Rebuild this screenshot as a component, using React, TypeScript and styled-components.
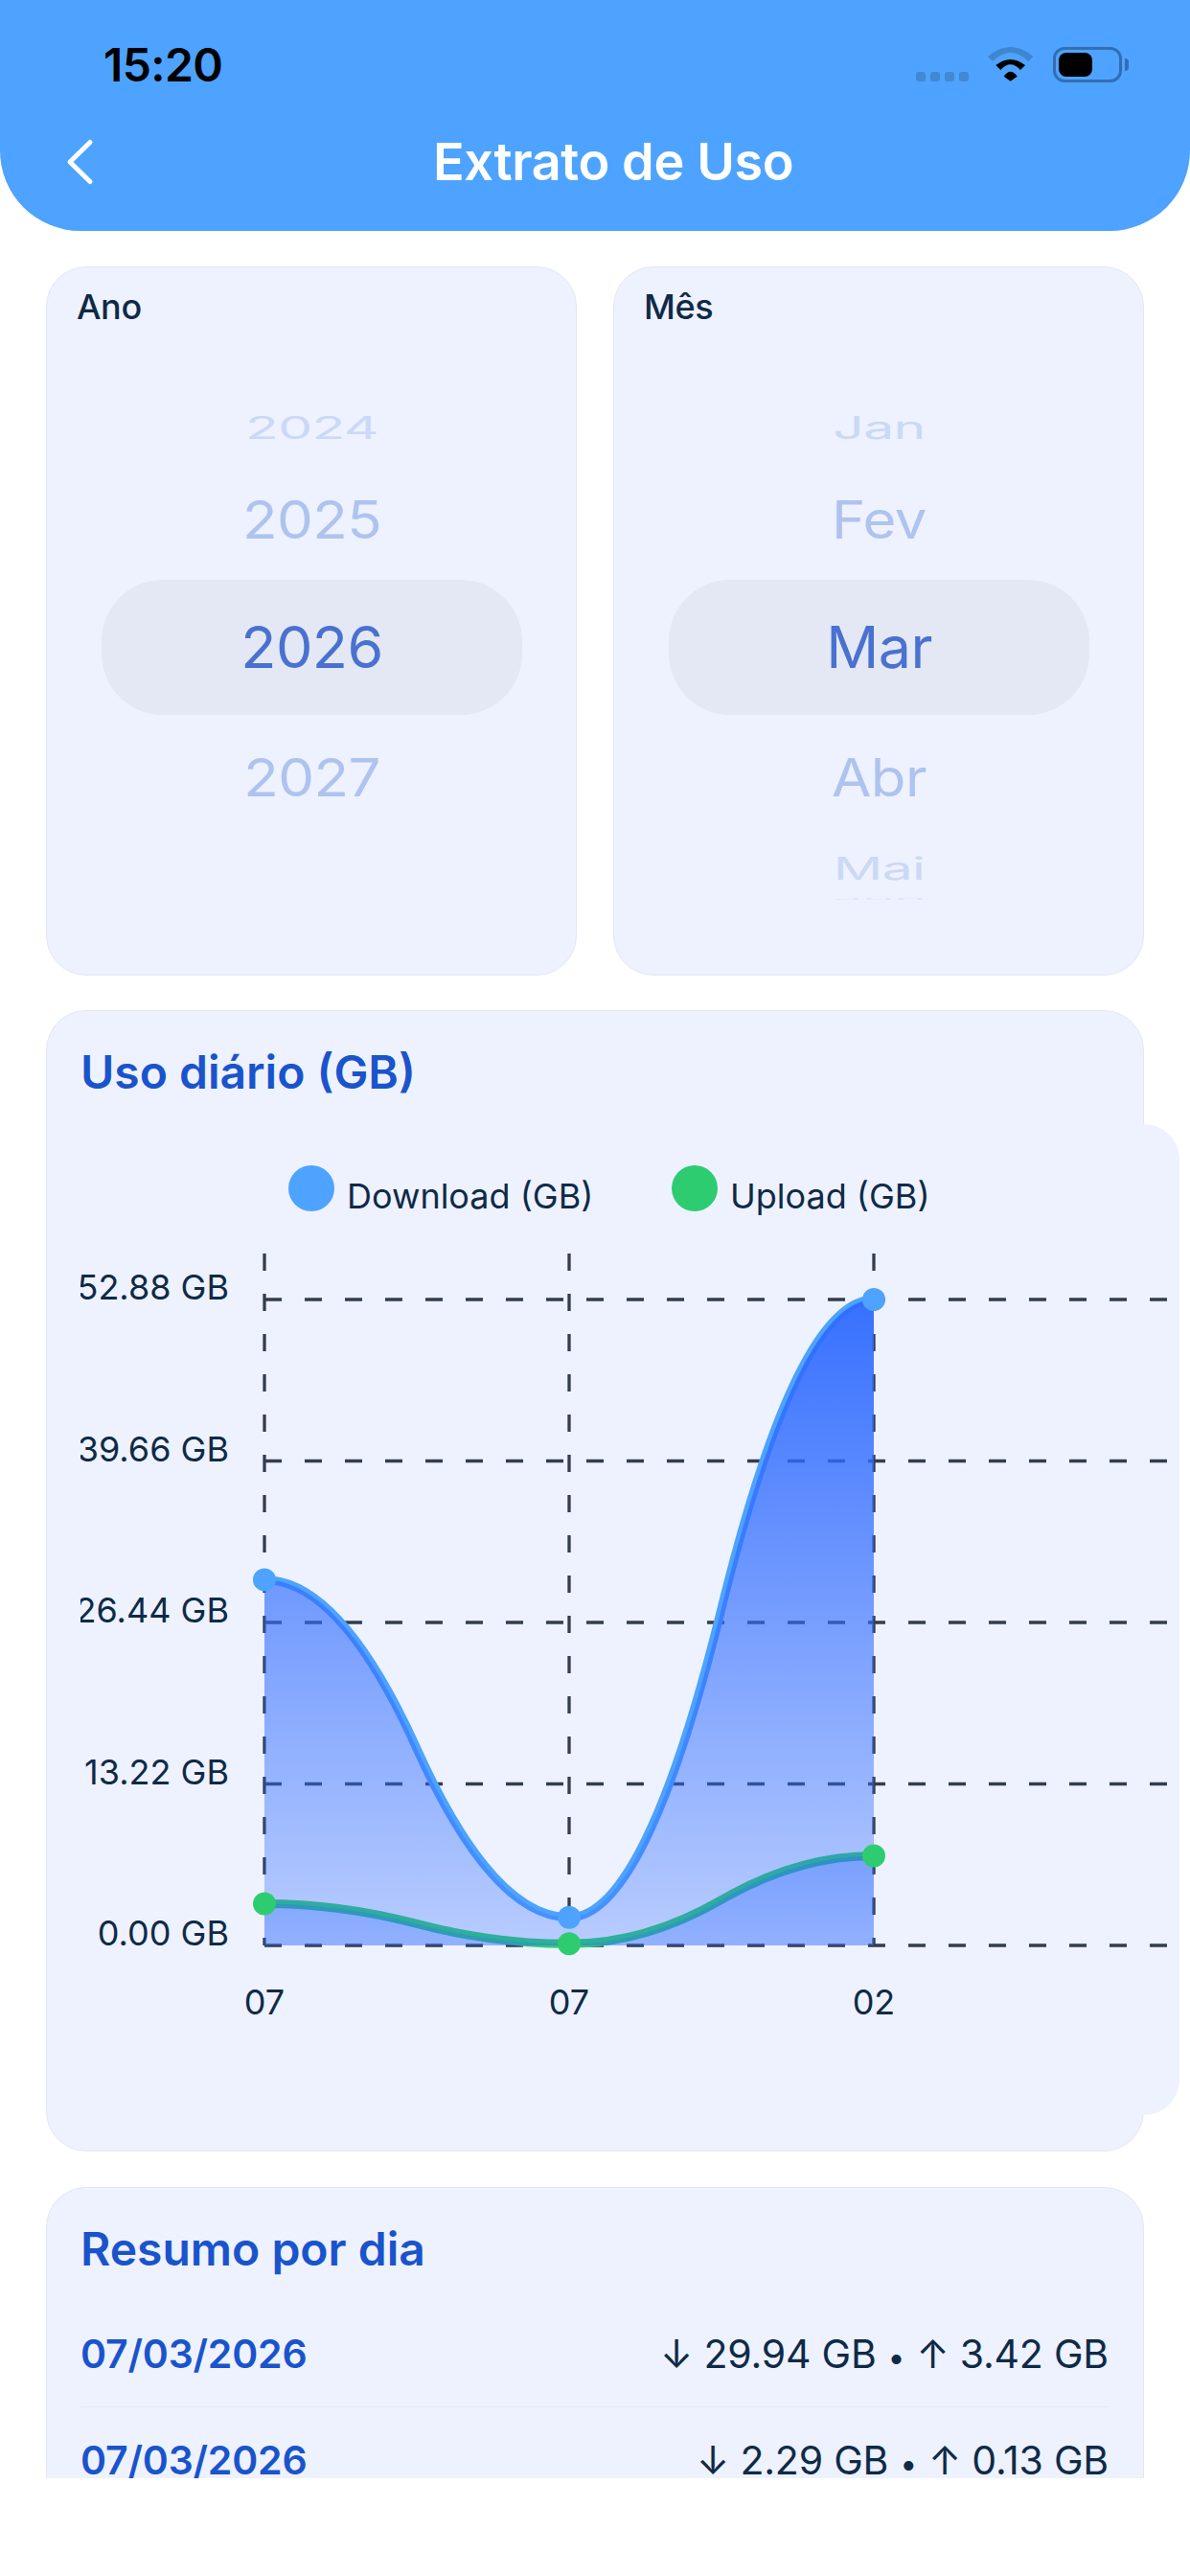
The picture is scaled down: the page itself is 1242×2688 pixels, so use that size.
import { FC } from "react";
import styled, { createGlobalStyle } from "styled-components";

const Colors = {
  header: "#4DA3FF",
  card: "#EEF2FE",
  cardBorder: "#E3E7F3",
  title: "#1A54CC",
  text: "#0F2A47",
  pill: "#E3E8F4",
  green: "#2ECC71",
  grid: "#333D4D",
};

const GlobalStyle = createGlobalStyle`
  html, body {
    margin: 0;
    padding: 0;
    background: #fff;
    font-family: Inter, "Liberation Sans", sans-serif;
  }
`;

const Page = styled.div`
  width: 1242px;
  height: 2688px;
  background: #fff;
  overflow: hidden;
`;

const Header = styled.header`
  height: 241px;
  box-sizing: border-box;
  background: ${Colors.header};
  border-radius: 0 0 84px 84px;
  display: flex;
  flex-direction: column;
`;

const StatusBar = styled.div`
  height: 128px;
  box-sizing: border-box;
  padding: 42px 71px 0 108px;
  display: flex;
  justify-content: space-between;
`;

const Clock = styled.div`
  font-size: 48px;
  line-height: 52px;
  font-weight: 600;
  color: #000;
  letter-spacing: -0.6px;
`;

const StatusIcons = styled.div`
  display: flex;
  align-items: flex-start;
  padding-top: 7px;
`;

const SignalDots = styled.div`
  display: flex;
  gap: 5px;
  margin-top: 26px;
  margin-right: 20px;
`;

const SignalDot = styled.span`
  width: 10px;
  height: 10px;
  border-radius: 3px;
  background: #4388d0;
`;

const Battery = styled.div`
  width: 72px;
  height: 37px;
  box-sizing: border-box;
  margin-left: 20px;
  border: 3px solid #336fb0;
  border-radius: 12px;
  padding: 3px;
  position: relative;
`;

const BatteryLevel = styled.div`
  width: 35px;
  height: 25px;
  background: #000;
  border-radius: 8px;
`;

const BatteryCap = styled.div`
  position: absolute;
  right: -10px;
  top: 9px;
  width: 4px;
  height: 13px;
  background: #336fb0;
  border-radius: 0 5px 5px 0;
`;

const NavBar = styled.div`
  display: flex;
  align-items: center;
  height: 82px;
  padding-left: 68px;
`;

const NavTitle = styled.div`
  margin-left: 354px;
  font-size: 54px;
  line-height: 60px;
  font-weight: 600;
  color: #fff;
  letter-spacing: -0.4px;
`;

const Content = styled.main`
  height: 2345px;
  box-sizing: border-box;
  overflow: hidden;
  padding: 37px 48px 0;
  display: flex;
  flex-direction: column;
`;

const PickerRow = styled.div`
  flex: none;
  display: flex;
  gap: 38px;
  margin-bottom: 36px;
`;

const PickerCard = styled.section`
  flex: 1;
  height: 740px;
  box-sizing: border-box;
  background: ${Colors.card};
  border: 1.5px solid ${Colors.cardBorder};
  border-radius: 42px;
  padding: 18px 0 0 31px;
`;

const PickerLabel = styled.div`
  font-size: 36px;
  line-height: 46px;
  font-weight: 500;
  color: ${Colors.text};
  letter-spacing: -0.4px;
`;

const Wheel = styled.div`
  margin: 71px 0 0 26px;
  width: 439px;
  display: flex;
  flex-direction: column;
`;

const WheelItem = styled.div<{ $h: number; $active?: boolean }>`
  height: ${(p) => p.$h}px;
  display: flex;
  align-items: center;
  justify-content: center;
  border-radius: ${(p) => (p.$active ? "64px" : "0")};
  background: ${(p) => (p.$active ? Colors.pill : "transparent")};
`;

const WheelText = styled.span<{ $scale: number; $color: string; $size: number }>`
  display: block;
  font-size: ${(p) => p.$size}px;
  line-height: 1;
  color: ${(p) => p.$color};
  transform: scaleY(${(p) => p.$scale});
  letter-spacing: -0.6px;
`;

const Card = styled.section`
  flex: none;
  box-sizing: border-box;
  width: 1146px;
  background: ${Colors.card};
  border: 1.5px solid ${Colors.cardBorder};
  border-radius: 42px;
  padding: 0 35px;
`;

const ChartCard = styled(Card)`
  height: 1191px;
  margin-bottom: 37px;
`;

const CardTitle = styled.h2`
  margin: 0;
  padding: 37px 0 27px;
  font-size: 48px;
  line-height: 54px;
  font-weight: 600;
  color: ${Colors.title};
`;

const ChartSurface = styled.div`
  width: 1147px;
  height: 1034px;
  background: ${Colors.card};
  border-radius: 0 37px 37px 0;
`;

const ChartSvg = styled.svg`
  display: block;
`;

const AxisText = styled.text`
  font-family: Inter, "Liberation Sans", sans-serif;
  font-size: 36px;
  fill: ${Colors.text};
`;

const SummaryCard = styled(Card)`
  height: 500px;
`;

const SummaryRow = styled.div<{ $divider?: boolean }>`
  display: flex;
  justify-content: space-between;
  align-items: baseline;
  height: 111px;
  box-sizing: border-box;
  padding-top: 30px;
  border-bottom: ${(p) => (p.$divider ? "1.5px solid #E6E9F4" : "none")};
`;

const RowDate = styled.span`
  font-size: 41px;
  line-height: 50px;
  font-weight: 600;
  color: ${Colors.title};
  letter-spacing: -0.2px;
`;

const RowValue = styled.span`
  margin-right: 1px;
  font-size: 41px;
  line-height: 50px;
  color: ${Colors.text};
  letter-spacing: -0.2px;
`;

const RowDot = styled.span`
  font-size: 32px;
  margin: 0 12px;
`;

type WheelEntry = { label: string; h: number; scale: number; color: string; size: number; active?: boolean };

const pale = "#CBD8F6";
const soft = "#AEC3EF";
const strong = "#4A71D0";

const makeWheel = (labels: string[]): WheelEntry[] => {
  const rows = [
    { h: 65, scale: 0.56, color: pale, size: 57 },
    { h: 126, scale: 0.92, color: soft, size: 60 },
    { h: 141, scale: 1, color: strong, size: 61, active: true },
    { h: 130, scale: 0.92, color: soft, size: 60 },
    { h: 60, scale: 0.56, color: pale, size: 57 },
    { h: 4, scale: 0.04, color: "#DDE5FA", size: 57 },
  ];
  return labels.map((label, i) => ({ label, ...rows[i] }));
};

const Picker: FC<{ title: string; labels: string[] }> = ({ title, labels }) => (
  <PickerCard>
    <PickerLabel>{title}</PickerLabel>
    <Wheel>
      {makeWheel(labels).map((w) => (
        <WheelItem key={w.label} $h={w.h} $active={w.active}>
          <WheelText $scale={w.scale} $color={w.color} $size={w.size}>
            {w.label}
          </WheelText>
        </WheelItem>
      ))}
    </Wheel>
  </PickerCard>
);

const gridX = [192, 510, 828];
const baseY = 857;
const gridStep = 168.5;
const toY = (v: number) => baseY - (v / 52.88) * 674;
const download = [29.94, 2.29, 52.88].map(toY);
const upload = [3.42, 0.13, 7.34].map(toY);
const yLabels = ["0.00 GB", "13.22 GB", "26.44 GB", "39.66 GB", "52.88 GB"];

function bezier(ys: number[]): string {
  let d = `M${gridX[0]} ${ys[0]}`;
  for (let i = 0; i < ys.length - 1; i++) {
    const xMid = (gridX[i] + gridX[i + 1]) / 2;
    const yMid = (ys[i] + ys[i + 1]) / 2;
    d += ` Q${(xMid + gridX[i]) / 2} ${ys[i]} ${xMid} ${yMid}`;
    d += ` Q${(xMid + gridX[i + 1]) / 2} ${ys[i + 1]} ${gridX[i + 1]} ${ys[i + 1]}`;
  }
  return d;
}

const area = (ys: number[]) => `${bezier(ys)} L${gridX[2]} ${baseY} L${gridX[0]} ${baseY} Z`;

const UsageChart: FC = () => (
  <ChartSvg width={1147} height={1034} viewBox="0 0 1147 1034">
    <defs>
      <linearGradient id="usageFill" gradientUnits="userSpaceOnUse" x1="0" y1="183" x2="0" y2="857">
        <stop offset="0" stopColor="#2F6BFF" stopOpacity={0.96} />
        <stop offset="1" stopColor="#2F6BFF" stopOpacity={0.28} />
      </linearGradient>
    </defs>

    <circle cx={241} cy={67} r={24} fill={Colors.header} />
    <AxisText x={278} y={88}>Download (GB)</AxisText>
    <circle cx={641} cy={67} r={24} fill={Colors.green} />
    <AxisText x={678} y={88}>Upload (GB)</AxisText>

    {gridX.map((x) => (
      <line key={x} x1={x} x2={x} y1={135} y2={baseY} stroke={Colors.grid} strokeWidth={3.3} strokeDasharray="18 24" />
    ))}
    {yLabels.map((label, i) => (
      <g key={label}>
        <line
          x1={gridX[0]}
          x2={1136}
          y1={baseY - i * gridStep}
          y2={baseY - i * gridStep}
          stroke={Colors.grid}
          strokeWidth={3.3}
          strokeDasharray="18 24"
        />
        <AxisText x={155} y={baseY - i * gridStep} textAnchor="end">
          {label}
        </AxisText>
      </g>
    ))}
    {["07", "07", "02"].map((label, i) => (
      <AxisText key={i} x={gridX[i]} y={929} textAnchor="middle">
        {label}
      </AxisText>
    ))}

    <path d={bezier(download)} fill="none" stroke={Colors.header} strokeWidth={9} />
    <path d={bezier(upload)} fill="none" stroke={Colors.green} strokeWidth={9} />
    <path d={area(download)} fill="url(#usageFill)" />
    <path d={area(upload)} fill="url(#usageFill)" />

    {download.map((y, i) => (
      <circle key={i} cx={gridX[i]} cy={y} r={12} fill={Colors.header} />
    ))}
    {upload.map((y, i) => (
      <circle key={i} cx={gridX[i]} cy={y} r={12} fill={Colors.green} />
    ))}
  </ChartSvg>
);

const WifiIcon: FC = () => (
  <svg width="48" height="37" viewBox="0 0 48 37">
    <path d="M0 10 Q23.6 -10 47.3 10 L42.3 15 Q23.6 -3 5 15 Z" fill="#3F86CF" />
    <path d="M8.3 19 Q23.6 7 39 19 L34 24 Q23.6 12.7 13.3 24 Z" fill="#000" />
    <path d="M16.7 30.7 Q23.6 20.7 30.7 30.7 L23.6 35.7 Z" fill="#000" />
  </svg>
);

const BackIcon: FC = () => (
  <svg width="30" height="50" viewBox="0 0 30 50">
    <path d="M26 4.5 L5 25 L26 45.5" fill="none" stroke="#fff" strokeWidth={5} strokeLinecap="round" strokeLinejoin="round" />
  </svg>
);

export const App: FC = () => {
  return (
    <Page>
      <GlobalStyle />
      <Header>
        <StatusBar>
          <Clock>15:20</Clock>
          <StatusIcons>
            <SignalDots>
              <SignalDot />
              <SignalDot />
              <SignalDot />
              <SignalDot />
            </SignalDots>
            <WifiIcon />
            <Battery>
              <BatteryLevel />
              <BatteryCap />
            </Battery>
          </StatusIcons>
        </StatusBar>
        <NavBar>
          <BackIcon />
          <NavTitle>Extrato de Uso</NavTitle>
        </NavBar>
      </Header>
      <Content>
        <PickerRow>
          <Picker title="Ano" labels={["2024", "2025", "2026", "2027"]} />
          <Picker title="Mês" labels={["Jan", "Fev", "Mar", "Abr", "Mai", "Jun"]} />
        </PickerRow>
        <ChartCard>
          <CardTitle>Uso diário (GB)</CardTitle>
          <ChartSurface>
            <UsageChart />
          </ChartSurface>
        </ChartCard>
        <SummaryCard>
          <CardTitle>Resumo por dia</CardTitle>
          <SummaryRow $divider>
            <RowDate>07/03/2026</RowDate>
            <RowValue>↓ 29.94 GB<RowDot>•</RowDot>↑ 3.42 GB</RowValue>
          </SummaryRow>
          <SummaryRow>
            <RowDate>07/03/2026</RowDate>
            <RowValue>↓ 2.29 GB<RowDot>•</RowDot>↑ 0.13 GB</RowValue>
          </SummaryRow>
        </SummaryCard>
      </Content>
    </Page>
  );
};

export default App;
